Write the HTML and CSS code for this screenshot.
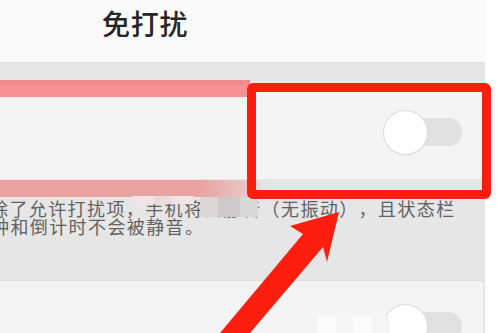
FILE: index.html
```html
<!DOCTYPE html>
<html lang="zh-CN">
<head>
    <meta charset="UTF-8">
    <meta name="viewport" content="width=device-width, initial-scale=1.0">
    <title>免打扰</title>
    <link rel="stylesheet" href="styles.css">
</head>
<body>
    <div class="screen">
        <div class="page">
            <div class="topbar">
                <h1 class="title">免打扰</h1>
            </div>

            <div class="card">
                <div class="switch">
                    <div class="track"></div>
                    <div class="knob"></div>
                </div>
            </div>

            <div class="desc">
                <p class="desc-line">除了允许打扰项，手机将会静音（无振动），且状态栏</p>
                <p class="desc-line desc-wrap">钟和倒计时不会被静音。</p>
            </div>

            <div class="card card-next">
                <div class="switch">
                    <div class="track"></div>
                    <div class="knob"></div>
                </div>
            </div>
        </div>

        <!-- annotation overlays -->
        <div class="smear smear-top"></div>
        <div class="smear smear-mid"></div>
        <div class="mosaic mosaic-text">
            <span class="tile t1"></span>
            <span class="tile t2"></span>
            <span class="tile t3"></span>
        </div>
        <div class="mosaic mosaic-light">
            <span class="tile t4"></span>
            <span class="tile t5"></span>
            <span class="tile t4"></span>
        </div>
        <div class="mosaic mosaic-switch">
            <span class="tile t6"></span>
            <span class="tile t7"></span>
            <span class="tile t6"></span>
            <span class="tile t7"></span>
        </div>
        <div class="mark-box"></div>
        <svg class="mark-arrow" width="500" height="333" viewBox="0 0 500 333">
            <polygon points="339,212 290,226 303,234 220,333 250,333 323,247 327,262" fill="#fe1e10"/>
        </svg>
    </div>
</body>
</html>
```

FILE: styles.css
```css
body {
    margin: 0;
    background-color: #fff;
    font-family: "Noto Sans CJK SC", "Noto Sans", sans-serif;
}
.screen {
    position: relative;
    width: 500px;
    height: 333px;
    overflow: hidden;
}
.page {
    width: 485px;
    height: 333px;
    background-color: #e6e6e6;
}
.topbar {
    height: 63px;
    box-sizing: border-box;
    padding: 9px 0 0 102px;
    background-color: #fafafa;
    border-bottom: 1px solid #e0e0e0;
}
.title {
    margin: 0;
    font-size: 28px;
    line-height: 28px;
    letter-spacing: 0.7px;
    font-weight: 500;
    color: #262626;
}
.card {
    display: flex;
    align-items: center;
    justify-content: flex-end;
    height: 94px;
    margin: 22px 2px 0 0;
    padding-right: 21px;
    background-color: #f4f4f4;
    border-top-right-radius: 4px;
}
.card-next {
    margin-top: 0;
    height: 60px;
    align-items: flex-start;
    padding-top: 24px;
    box-sizing: border-box;
}
.switch {
    position: relative;
    width: 78px;
    height: 43px;
}
.track {
    margin: 7px 0 0 6px;
    width: 72px;
    height: 28px;
    border-radius: 14px;
    background-color: #e1e1e1;
}
.knob {
    position: absolute;
    left: 0;
    top: 0;
    width: 43px;
    height: 43px;
    border-radius: 50%;
    background-color: #fff;
    box-shadow: 0 0 0 1px #dcdcdc, 0 1px 2px rgba(0, 0, 0, 0.12);
}
.desc {
    height: 102px;
    box-sizing: border-box;
    padding-top: 20px;
    margin-right: 2px;
    border-bottom: 1px solid #dedede;
}
.desc-line {
    margin: 0 0 0 -10px;
    white-space: nowrap;
    font-size: 18px;
    line-height: 18px;
    letter-spacing: 1.4px;
    text-spacing-trim: space-all;
    color: #626262;
}
.desc-wrap {
    margin-left: -9px;
}
.smear {
    position: absolute;
    left: 0;
    height: 17px;
}
.smear-top {
    top: 80px;
    width: 250px;
    background-color: rgba(250, 40, 40, 0.48);
}
.smear-mid {
    top: 180px;
    width: 266px;
    background: linear-gradient(to right, rgba(240, 50, 50, 0.38) 75%, rgba(240, 50, 50, 0.18) 92%, rgba(240, 50, 50, 0));
}
.mosaic {
    position: absolute;
    display: flex;
}
.tile {
    display: block;
    width: 18px;
    height: 100%;
}
.mosaic-text {
    left: 200px;
    top: 197px;
    height: 20px;
}
.mosaic-light {
    left: 132px;
    top: 196px;
    height: 8px;
}
.mosaic-switch {
    left: 318px;
    top: 316px;
    height: 17px;
}
.t1 { background-color: #dcd6d6; }
.t2 { background-color: #cfcaca; width: 22px; }
.t3 { background-color: #d9d7d7; }
.t4 { background-color: #f1e4e4; width: 22px; }
.t5 { background-color: #ecd9d9; }
.t6 { background-color: #fbfbfb; }
.t7 { background-color: #f6f6f6; }
.mark-box {
    position: absolute;
    left: 247px;
    top: 83px;
    width: 244px;
    height: 116px;
    box-sizing: border-box;
    border: 9px solid #fe1e10;
    border-radius: 6px;
}
.mark-arrow {
    position: absolute;
    left: 0;
    top: 0;
}
```
